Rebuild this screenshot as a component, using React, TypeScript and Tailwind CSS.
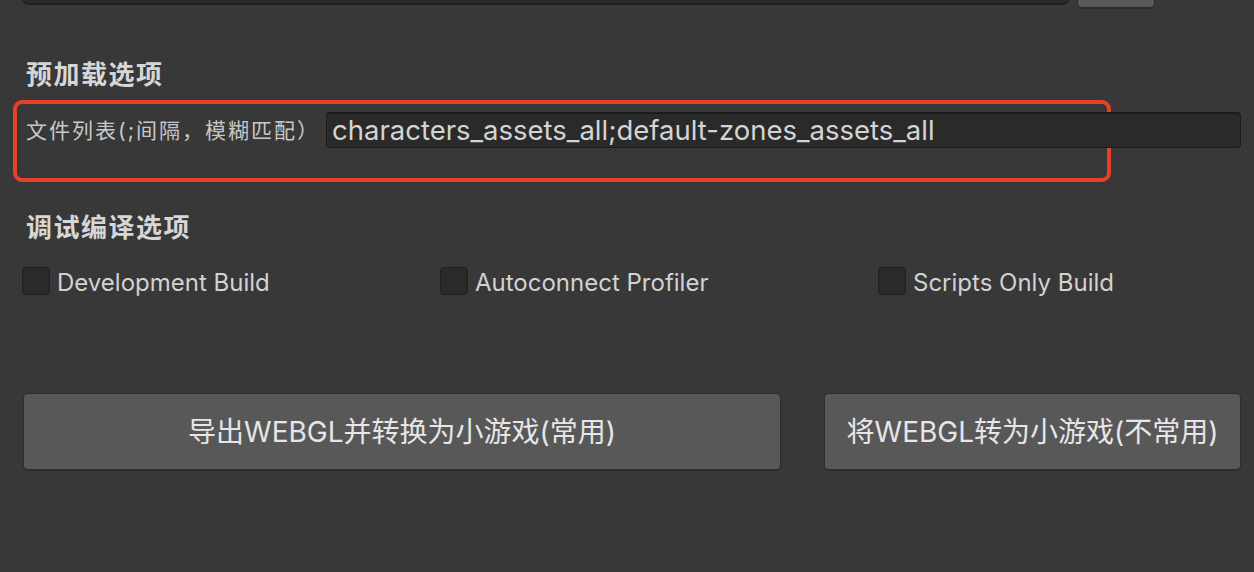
import React from "react";

const font = '"Inter", "Noto Sans CJK SC", sans-serif';

function Check({ label }: { label: string }) {
  return (
    <div className="flex items-center">
      <div className="w-[28px] h-[28px] rounded-[4px] bg-[#2a2a2a] border border-[#1e1e1e]" />
      <span className="ml-[7px] mt-[3px] text-[24px] text-[#d2d2d2] leading-none">{label}</span>
    </div>
  );
}

export default function App() {
  return (
    <div
      className="w-[1254px] h-[572px] bg-[#383838] overflow-hidden"
      style={{ fontFamily: font }}
    >
      {/* top row (cut off) */}
      <div className="flex items-start -mt-[30px]">
        <div className="ml-[22px] w-[1047px] h-[35px] rounded-[6px] bg-[#2a2a2a] border border-[#1f1f1f] border-b-2" />
        <div className="ml-[8px] w-[78px] h-[39px] rounded-[5px] bg-[#585858] border border-[#2a2a2a] border-b-2" />
      </div>

      <div className="ml-[26px] mt-[49px] text-[26px] font-bold tracking-[1.5px] text-[#d6d6d6] leading-[34px]">
        预加载选项
      </div>

      <div className="ml-[13px] mt-[8px] w-[1098px] h-[82px] rounded-[9px] border-[4px] border-[#e8412b] relative">
        <div className="absolute left-[9px] top-[8px] flex items-start w-[1215px]">
          <span className="mt-[5px] text-[21px] tracking-[2px] text-[#c8c8c8] leading-[28px] whitespace-nowrap w-[300px]">
            文件列表(;间隔，模糊匹配）
          </span>
          <div className="flex-1 h-[36px] rounded-[4px] bg-[#2a2a2a] border border-[#1c1c1c] border-t-2 flex items-center pl-[5px]">
            <span className="text-[27.5px] text-[#d4d4d4] leading-none">
              characters_assets_all;default-zones_assets_all
            </span>
          </div>
        </div>
      </div>

      <div className="ml-[26px] mt-[29px] text-[26px] font-bold tracking-[1.5px] text-[#d6d6d6] leading-[34px]">
        调试编译选项
      </div>

      <div className="mt-[22px] ml-[22px] grid grid-cols-[418px_438px_1fr]">
        <Check label="Development Build" />
        <Check label="Autoconnect Profiler" />
        <Check label="Scripts Only Build" />
      </div>

      <div className="mt-[98px] ml-[23px] flex gap-[43px]">
        <button className="w-[758px] h-[78px] rounded-[5px] bg-[#585858] border border-[#2c2c2c] border-b-2 text-[28px] text-[#e6e6e6]">
          导出WEBGL并转换为小游戏(常用)
        </button>
        <button className="w-[417px] h-[78px] rounded-[5px] bg-[#585858] border border-[#2c2c2c] border-b-2 text-[28px] text-[#e6e6e6]">
          将WEBGL转为小游戏(不常用)
        </button>
      </div>
    </div>
  );
}
